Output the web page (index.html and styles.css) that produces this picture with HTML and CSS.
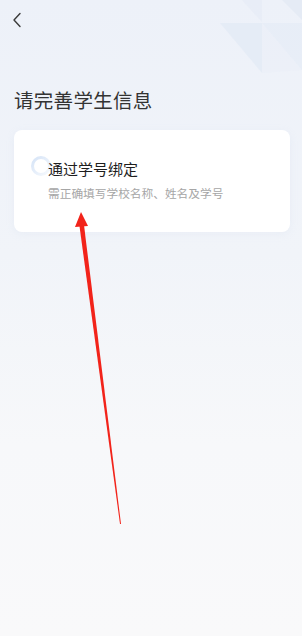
FILE: index.html
```html
<!DOCTYPE html>
<html lang="zh">
<head>
<meta charset="utf-8">
<link rel="stylesheet" href="styles.css">
</head>
<body>
<div class="page">
  <svg class="deco" width="90" height="80" viewBox="0 0 90 80">
    <polygon points="8,23 50,23 50,73" fill="#dfe7f4" opacity="0.55"/>
    <polygon points="50,23 90,23 90,70" fill="#e2e9f5" opacity="0.5"/>
    <polygon points="30,0 50,0 50,22" fill="#e4eaf5" opacity="0.5"/>
    <polygon points="70,0 90,0 90,20" fill="#dfe6f3" opacity="0.55"/>
    <polygon points="50,23 90,70 50,73" fill="#e8edf7" opacity="0.4"/>
  </svg>
  <div class="nav">
    <svg class="back" width="10" height="16" viewBox="0 0 10 16">
      <path d="M8 1.5 L2 8 L8 14.5" fill="none" stroke="#3a3a3a" stroke-width="1.4" stroke-linecap="round" stroke-linejoin="round"/>
    </svg>
  </div>
  <h1 class="title">请完善学生信息</h1>
  <div class="card">
    <svg class="ring" width="22" height="26" viewBox="0 0 22 26">
      <defs>
        <linearGradient id="rg" x1="0" y1="0" x2="1" y2="1">
          <stop offset="0" stop-color="#d6e4f7"/>
          <stop offset="1" stop-color="#f6f9fd"/>
        </linearGradient>
      </defs>
      <circle cx="11" cy="13" r="8.5" fill="none" stroke="url(#rg)" stroke-width="3"/>
    </svg>
    <div class="card-title">通过学号绑定</div>
    <div class="card-sub">需正确填写学校名称、姓名及学号</div>
  </div>
  <svg class="arrow" width="302" height="636" viewBox="0 0 302 636">
    <polygon points="79.2,224 83.8,223.5 121,524 120,524" fill="#f2231a"/>
    <polygon points="81,212 88,226 75,227" fill="#f2231a"/>
  </svg>
</div>
</body>
</html>
```
FILE: styles.css
```css
html, body {
  margin: 0;
  padding: 0;
}
body {
  font-family: "Noto Sans CJK SC", "Noto Sans", sans-serif;
}
.page {
  position: relative;
  width: 302px;
  height: 636px;
  overflow: hidden;
  background: linear-gradient(180deg, #edf1f9 0%, #f1f4f9 40%, #f7f8fa 70%, #f9f9fa 100%);
}
.deco {
  position: absolute;
  top: 0;
  right: 0;
}
.nav {
  height: 40px;
  display: flex;
  align-items: center;
  padding-left: 12px;
  position: relative;
}
.title {
  margin: 46px 0 0 14px;
  font-size: 19.5px;
  line-height: 28px;
  font-weight: 400;
  color: #333;
  letter-spacing: 0.3px;
}
.card {
  position: relative;
  margin: 16px 12px 0 14px;
  background: #fff;
  border-radius: 8px;
  padding: 28px 20px 30px 34px;
  box-shadow: 0 2px 8px rgba(180, 195, 220, 0.12);
}
.ring {
  position: absolute;
  left: 16px;
  top: 23px;
}
.card-title {
  position: relative;
  font-size: 15px;
  line-height: 22px;
  color: #1e1e1e;
}
.card-sub {
  margin-top: 4px;
  font-size: 11.7px;
  line-height: 18px;
  color: #a6a6a6;
}
.arrow {
  position: absolute;
  left: 0;
  top: 0;
  pointer-events: none;
}
```
